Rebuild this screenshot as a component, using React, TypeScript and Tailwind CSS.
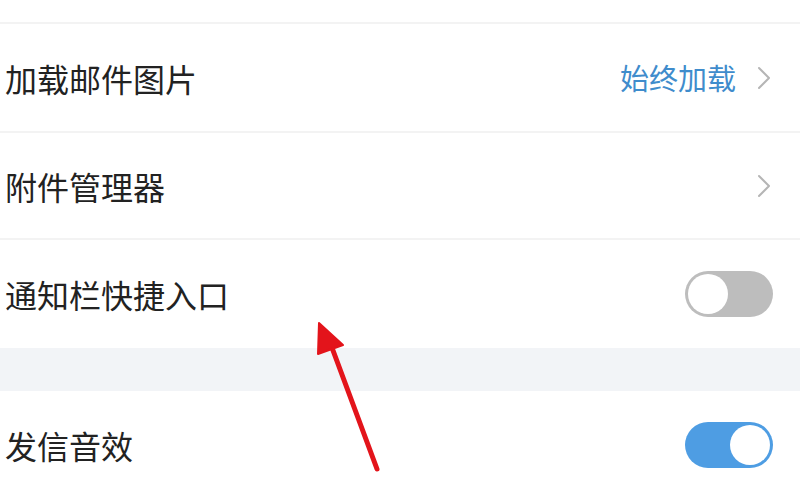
import { ReactNode } from "react";

const FONT = { fontFamily: '"Noto Sans CJK SC", "Noto Sans", sans-serif' };

function Chevron() {
  return (
    <svg width="16" height="26" viewBox="0 0 16 26" className="ml-[20px] mr-[28px]">
      <path d="M3 3 L13 13 L3 23" fill="none" stroke="#b5b5b5" strokeWidth="2" strokeLinecap="round" strokeLinejoin="round" />
    </svg>
  );
}

function Toggle({ on }: { on: boolean }) {
  return (
    <div
      className={`mr-[27px] flex h-[46px] w-[88px] items-center rounded-full p-[3px] ${
        on ? "justify-end bg-[#4e9de3]" : "justify-start bg-[#bdbdbd]"
      }`}
    >
      <div className="h-[40px] w-[40px] rounded-full bg-white" />
    </div>
  );
}

function Row({ label, h, children, last }: { label: string; h: string; children?: ReactNode; last?: boolean }) {
  return (
    <div
      className={`flex items-center justify-between ${h} ${
        last ? "" : "border-b-2 border-[#f3f3f3]"
      }`}
    >
      <span className="pl-[5px] text-[32px] text-[#222]">{label}</span>
      <div className="flex items-center">{children}</div>
    </div>
  );
}

export default function App() {
  return (
    <div className="relative h-[498px] w-[800px] overflow-hidden bg-white" style={FONT}>
      <div className="h-[24px] border-b-2 border-[#f3f3f3]" />
      <Row label="加载邮件图片" h="h-[109px]">
        <span className="text-[29px] text-[#3f8ccc]">始终加载</span>
        <Chevron />
      </Row>
      <Row label="附件管理器" h="h-[107px]">
        <Chevron />
      </Row>
      <Row label="通知栏快捷入口" h="h-[108px]" last>
        <Toggle on={false} />
      </Row>
      <div className="h-[43px] bg-[#f2f4f7]" />
      <Row label="发信音效" h="h-[107px]" last>
        <Toggle on />
      </Row>

      {/* red annotation arrow */}
      <svg className="absolute left-0 top-0" width="800" height="498" viewBox="0 0 800 498">
        <line x1="377" y1="469" x2="331" y2="345" stroke="#e3141b" strokeWidth="5" strokeLinecap="round" />
        <polygon points="319,323 343,345 318,354" fill="#e3141b" stroke="#e3141b" strokeWidth="2" strokeLinejoin="round" />
      </svg>
    </div>
  );
}
